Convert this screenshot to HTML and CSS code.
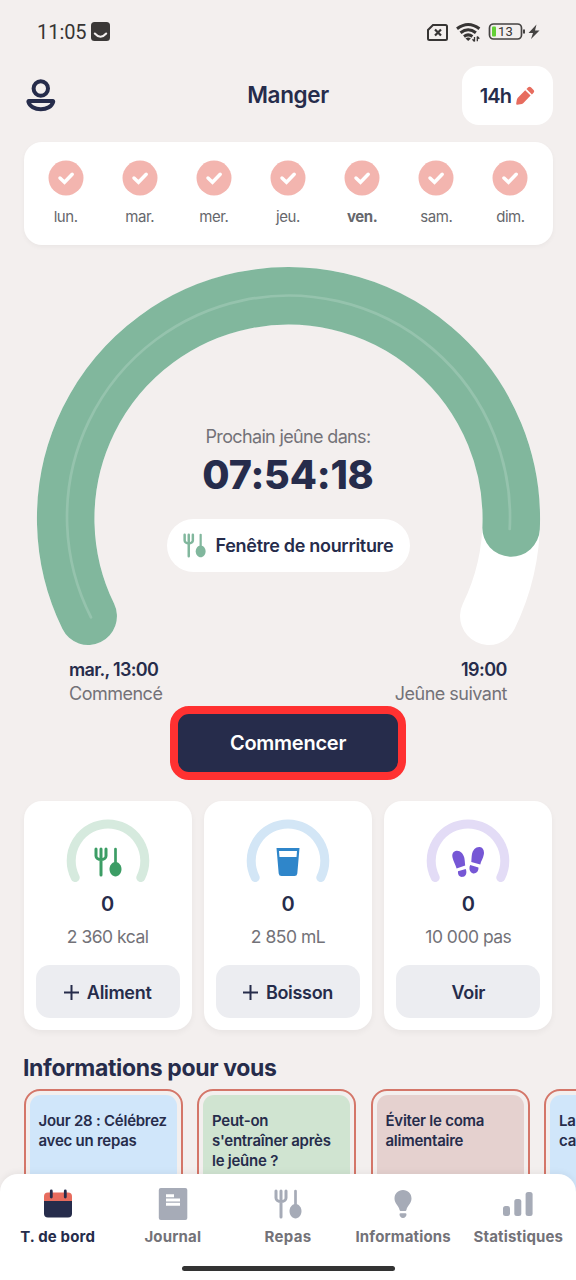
FILE: index.html
```html
<!DOCTYPE html>
<html lang="fr">
<head>
<meta charset="utf-8">
<title>Manger</title>
<link rel="stylesheet" href="styles.css">
</head>
<body>
<svg width="0" height="0" class="defs">
  <symbol id="check" viewBox="0 0 36 36"><circle cx="18" cy="18" r="17.5" fill="#f3b5af"/><path d="M12 18l4.500 4.300 7.700-8" fill="none" stroke="#fff" stroke-width="3.500" stroke-linecap="round" stroke-linejoin="miter"/></symbol>
  <symbol id="cutlery" viewBox="0 0 28 30"><path d="M2 2v7a5 3.500 0 0 0 10 0V2M7 2v26" fill="none" stroke="currentColor" stroke-width="3" stroke-linecap="round"/><path d="M21.500 2v15" stroke="currentColor" stroke-width="2.700" stroke-linecap="round"/><path d="M21.500 15c3.400 0 6 3.400 6 7 0 4.200-2.800 7.400-6 7.400s-6-3.200-6-7.400c0-3.600 2.600-7 6-7z" fill="currentColor"/></symbol>
  <symbol id="gauge" viewBox="0 0 84 64"><path d="M9.200 58.500A36.800 36.800 0 1 1 74.800 58.500" fill="none" stroke="currentColor" stroke-width="9" stroke-linecap="round"/></symbol>
</svg>
<div class="screen">
  <div class="status">
    <span class="clock">11:05</span>
    <svg class="app" width="19" height="19"><rect width="19" height="19" rx="3.500" fill="#3b3837"/><path d="M3.800 11.500q5.700 6.400 11.400 0" fill="none" stroke="#f3efee" stroke-width="2" stroke-linecap="round"/></svg>
    <svg class="sysicons" width="116" height="22" viewBox="426 21 116 22">
      <path d="M433 25h12.500a1.500 1.500 0 0 1 1.500 1.500v12a1.500 1.500 0 0 1-1.500 1.500h-16a1.500 1.500 0 0 1-1.500-1.500V30z" fill="none" stroke="#373534" stroke-width="2"/>
      <path d="M435 29.500l6 6m0-6l-6 6" stroke="#373534" stroke-width="2.200"/>
      <g fill="none" stroke="#373534" stroke-width="3"><path d="M457 28.800q11.200-8.500 22.400 0"/><path d="M460.500 32.800q7.700-6 15.400 0"/><path d="M464 36.500q4.200-3.200 8.400 0"/></g>
      <path d="M465.500 38.500q2.700-2 5.400 0l-2.700 2.500z" fill="#373534"/>
      <path d="M474.500 37v4.500M474.500 41.500l-2-2.200M477.300 41.300v-4.800M477.300 36.500l2 2.200" stroke="#373534" stroke-width="1.300" fill="none"/>
      <rect x="489.500" y="24" width="32" height="15" rx="4" fill="none" stroke="#454342" stroke-width="1.700"/>
      <rect x="492" y="26.500" width="4" height="10" rx="1" fill="#62cf35"/><path d="M524 29.500v4" stroke="#454342" stroke-width="2"/>
      <text x="498" y="36" class="battery">13</text>
      <path d="M536.500 24.500l-8 8.500h4.500l-2 6 8.500-8.500h-4.500z" fill="#454342"/>
    </svg>
  </div>
  <header class="header">
    <svg class="profile" width="30" height="34" viewBox="0 0 30 34"><g fill="none" stroke="#262c4b" stroke-width="4"><circle cx="14.800" cy="9.500" r="7.200"/><path d="M2.800 22h24c.3 0 .5.300.4.700-1.200 4.600-6.400 7.600-12.400 7.600S3.600 27.300 2.400 22.700c-.1-.4.100-.7.400-.7z"/></g></svg>
    <h1 class="title">Manger</h1>
    <div class="goal"><span>14h</span><svg width="20" height="20" viewBox="0 0 20 20" fill="#e76c5e"><path d="M10.200 4.200l5.400 5.400-7.400 7.600q-1 .9-3 1.100l-3 .4q-1.200 0-1-1.200l.5-3q.2-1.800 1.100-2.800z"/><path d="M11.500 3l1.700-1.700q1.300-1.300 2.700 0l2.700 2.700q1.300 1.300 0 2.700l-1.700 1.700z"/></svg></div>
  </header>
  <section class="week">
    <div class="day"><svg><use href="#check"/></svg><span>lun.</span></div>
    <div class="day"><svg><use href="#check"/></svg><span>mar.</span></div>
    <div class="day"><svg><use href="#check"/></svg><span>mer.</span></div>
    <div class="day"><svg><use href="#check"/></svg><span>jeu.</span></div>
    <div class="day today"><svg><use href="#check"/></svg><span>ven.</span></div>
    <div class="day"><svg><use href="#check"/></svg><span>sam.</span></div>
    <div class="day"><svg><use href="#check"/></svg><span>dim.</span></div>
  </section>
  <section class="dial">
    <svg class="ring" width="576" height="382" viewBox="0 265 576 382" fill="none" stroke-linecap="round">
      <path d="M88.200 616.200A222.800 222.800 0 1 1 488.800 616.200" stroke="#fff" stroke-width="57.500"/>
      <path d="M88.200 616.200A222.800 222.800 0 1 1 511.100 528" stroke="#81b79d" stroke-width="57.500"/>
      <path d="M91 617.300A221.500 221.500 0 1 1 509.700 529" stroke="#95c3ad" stroke-width="2.700"/>
    </svg>
    <div class="timer">
      <span class="caption">Prochain jeûne dans:</span>
      <strong class="count">07:54:18</strong>
      <div class="window"><svg width="23" height="25"><use href="#cutlery"/></svg><span>Fenêtre de nourriture</span></div>
    </div>
  </section>
  <section class="times">
    <div class="time"><strong class="start">mar., 13:00</strong><span class="began">Commencé</span></div>
    <div class="time end"><strong class="stop">19:00</strong><span class="next">Jeûne suivant</span></div>
  </section>
  <button class="begin"><span>Commencer</span></button>
  <section class="stats">
    <article class="stat food"><div class="meter"><svg class="gauge"><use href="#gauge"/></svg><svg class="glyph" width="28" height="30"><use href="#cutlery"/></svg></div><strong>0</strong><span class="target">2 360 kcal</span><div class="action"><svg width="15" height="15"><path d="M7.500 0v15M0 7.500h15"/></svg><span>Aliment</span></div></article>
    <article class="stat drink"><div class="meter"><svg class="gauge"><use href="#gauge"/></svg><svg class="glyph" width="24" height="30" viewBox="0 0 24 30"><path fill-rule="evenodd" d="M.5 1h23l-2.200 25.500q-.3 2.500-2.800 2.500h-13q-2.500 0-2.800-2.500zM3 4l.5 6h17l.5-6z" fill="currentColor"/></svg></div><strong>0</strong><span class="target">2 850 mL</span><div class="action"><svg width="15" height="15"><path d="M7.500 0v15M0 7.500h15"/></svg><span>Boisson</span></div></article>
    <article class="stat walk"><div class="meter"><svg class="gauge"><use href="#gauge"/></svg><svg class="glyph" width="34" height="32" viewBox="0 0 34 32" fill="currentColor"><path d="M1.500 10.500C.7 6.500 2.500 4 5.500 3.700c4-.3 6.700 3 7.800 7 .6 2.500.5 5 .9 7.800L5.600 21.500C4.600 17.500 2.300 14.500 1.500 10.500zM7 24.300l7.700-2.400c1.500 3.500.5 7-2.500 7.900-3.200.8-5.700-1.500-5.200-5.500z"/><path d="M32.800 7.500c.8-4-1-7-4-7.400-4-.4-7 3-7.800 7-.5 2.500-.4 5-.7 7.800l9 2.700c.6-3.500 2.900-6.100 3.500-10.100zM27.400 20.500l-8.200-2.400c-1.600 3.300-.6 7.300 2.400 8.200 3.300.9 6.300-1.800 5.800-5.800z"/></svg></div><strong>0</strong><span class="target">10 000 pas</span><div class="action"><span>Voir</span></div></article>
  </section>
  <h2 class="heading">Informations pour vous</h2>
  <section class="articles">
    <article class="tip"><div class="blue"><p>Jour 28 : Célébrez<br>avec un repas</p></div></article>
    <article class="tip"><div class="green"><p>Peut-on<br>s'entraîner après<br>le jeûne ?</p></div></article>
    <article class="tip"><div class="pink"><p>Éviter le coma<br>alimentaire</p></div></article>
    <article class="tip"><div class="blue"><p>La<br>caf</p></div></article>
  </section>
  <nav class="nav">
    <div class="tabs">
      <div class="tab active"><svg width="30" height="30" viewBox="0 0 30 30"><path d="M1 12h28v12.500q0 4-4 4H5q-4 0-4-4z" fill="#262c4b"/><path d="M1 12V7.500q0-4 4-4h20q4 0 4 4V12z" fill="#e76c5e"/><path d="M8.300 2v6M22.300 2v6" stroke="#262c4b" stroke-width="2.800" stroke-linecap="round"/></svg><span>T. de bord</span></div>
      <div class="tab"><svg width="30" height="34" viewBox="0 0 30 34"><rect x=".8" y="1" width="28.500" height="32" rx="2" fill="#a6abb7"/><path d="M8 8.800h8M8 13h14M8 17.300h14" stroke="#fff" stroke-width="3"/></svg><span>Journal</span></div>
      <div class="tab"><svg width="28" height="30"><use href="#cutlery"/></svg><span class="meals">Repas</span></div>
      <div class="tab"><svg width="18" height="30" viewBox="0 0 18 30" fill="#a6abb7"><path d="M9 1c5 0 8.500 3.700 8.500 8.400 0 5.200-4.300 7-5 11.300-.2.900-.7 1.300-1.500 1.300H7c-.8 0-1.300-.4-1.500-1.300-.7-4.300-5-6.100-5-11.300C.5 4.700 4 1 9 1zM5.500 25.300q0-1.100 1.200-1.100h4.600q1.200 0 1.200 1.100c0 2-1.400 3.700-3.500 3.700s-3.500-1.700-3.500-3.700z"/></svg><span>Informations</span></div>
      <div class="tab"><svg width="30" height="26" viewBox="0 0 30 26" fill="#a6abb7"><rect x="0" y="15" width="7" height="10" rx="2.500"/><rect x="11.300" y="8" width="7" height="17" rx="2.500"/><rect x="22.600" y="1" width="7" height="24" rx="2.500"/></svg><span>Statistiques</span></div>
    </div>
    <div class="homebar"></div>
  </nav>
</div>
</body>
</html>
```
FILE: styles.css
```css
* { box-sizing: border-box; }
body { margin: 0; background: #f3efee; color: #262c4b; font-family: Inter, "Open Sans", sans-serif; }
h1, h2, p { margin: 0; }
svg { display: block; flex: none; }
span, strong { white-space: nowrap; }
.defs { position: absolute; }
.screen { width: 576px; height: 1280px; overflow: hidden; display: flex; flex-direction: column; }
.status { height: 66px; padding: 21px 34px 0 37px; display: flex; align-items: flex-start; flex: none; }
.clock { font: 20px/22px Roboto, sans-serif; color: #373534; letter-spacing: -.05px; }
.app { margin: 1px 0 0 4px; }
.sysicons { margin-left: auto; }
.battery { font: 13px Roboto, sans-serif; fill: #373534; letter-spacing: .2px; }
.header { height: 59px; padding: 0 23px 0 26px; display: grid; grid-template-columns: 91px 1fr 91px; align-items: center; flex: none; }
.title { font-size: 22.500px; line-height: 28px; font-weight: 600; text-align: center; letter-spacing: -.35px; padding: 0 3px 2px 0; }
.goal { height: 59px; border-radius: 17px; background: #fff; display: flex; align-items: center; justify-content: center; gap: 4px; font-size: 20px; font-weight: 600; letter-spacing: -.8px; }
.week { height: 103px; margin: 17px 23.500px 0; padding: 18px 5px 0; border-radius: 18px; background: #fff; box-shadow: 0 2px 5px #0000000a; display: grid; grid-template-columns: repeat(7, 1fr); flex: none; }
.day { display: flex; flex-direction: column; align-items: center; gap: 11px; font-size: 15px; line-height: 20px; color: #66676c; letter-spacing: -.45px; }
.day svg { width: 36px; height: 36px; }
.today { font-weight: 700; }
.dial { height: 382px; margin-top: 20px; display: grid; flex: none; }
.ring, .timer { grid-area: 1 / 1; }
.timer { display: flex; flex-direction: column; align-items: center; padding-top: 160px; }
.caption { font-size: 18px; line-height: 24px; color: #737278; letter-spacing: -.65px; }
.count { font-size: 39.500px; line-height: 46px; margin-top: 3px; font-weight: 800; letter-spacing: -.2px; }
.window { margin-top: 21px; width: 243px; height: 53px; border-radius: 27px; background: #fff; display: flex; justify-content: center; align-items: center; gap: 10px; font-size: 18px; font-weight: 600; letter-spacing: -.3px; }
.window svg { color: #81b79d; }
.times { display: flex; justify-content: space-between; margin-top: 11px; padding: 0 69px; flex: none; }
.time { display: flex; flex-direction: column; font-size: 18px; line-height: 24px; letter-spacing: -.5px; }
.time strong { font-weight: 600; }
.start { letter-spacing: -.7px; }
.time span { color: #737278; }
.end { align-items: flex-end; }
.begin { width: 236px; height: 74px; margin: 0 auto; border: 8px solid #ff3131; border-radius: 19px; background: #262c4b; color: #fff; font: 600 20px Inter, sans-serif; letter-spacing: -.25px; flex: none; }
.stats { display: grid; grid-template-columns: repeat(3, 1fr); gap: 12px; margin: 21px 23.500px 0; flex: none; }
.stat { height: 229px; padding: 18px 12px 12px; border-radius: 18px; background: #fff; box-shadow: 0 3px 6px #0000000b; display: flex; flex-direction: column; align-items: center; }
.stat strong { font-size: 20px; line-height: 24px; margin-top: 9px; font-weight: 600; }
.target { font-size: 17.500px; line-height: 24px; margin-top: 9px; color: #737278; letter-spacing: -.5px; }
.meter { width: 84px; height: 64px; display: grid; justify-items: center; }
.gauge, .glyph { grid-area: 1 / 1; }
.gauge { width: 84px; height: 64px; }
.glyph { margin-top: 28px; }
.food .gauge { color: #d6eade; }
.food .glyph { color: #3c9d65; }
.drink .gauge { color: #d3e6f6; }
.drink .glyph { color: #2f86ca; }
.walk .gauge { color: #e3dcf6; }
.walk .glyph { color: #7657d5; margin-top: 28px; }
.action { margin-top: auto; width: 100%; height: 53px; padding-top: 1px; border-radius: 14px; background: #ecedf1; display: flex; justify-content: center; align-items: center; gap: 8px; font-size: 18px; font-weight: 600; letter-spacing: -.3px; }
.action path { stroke: #262c4b; stroke-width: 2; }
.heading { font-size: 23px; line-height: 28px; font-weight: 700; letter-spacing: -.35px; margin: 24px 23px 0; flex: none; }
.articles { height: 115px; margin-top: 7px; padding-left: 23.500px; display: flex; gap: 14.500px; overflow: hidden; flex: none; }
.tip { width: 159px; height: 180px; padding: 4px; border: 2px solid #d47669; border-radius: 16px; flex: none; }
.tip div { height: 100%; padding: 16px 9px; border-radius: 11px; font-size: 15px; font-weight: 600; line-height: 20px; letter-spacing: -.25px; white-space: nowrap; }
.blue { background: #d0e6fa; }
.green { background: #d0e4d1; }
.pink { background: #e5d1cf; }
.nav { position: relative; height: 106px; margin-top: -30px; border-radius: 18px 18px 0 0; background: #fff; box-shadow: 0 -2px 6px #0000000d; flex: none; }
.tabs { display: grid; grid-template-columns: repeat(5, 115.200px); height: 91.500px; }
.tab { display: grid; grid-template-rows: 35px 20px; justify-items: center; align-items: center; align-content: start; row-gap: 6px; padding-top: 12px; font-size: 15px; line-height: 20px; font-weight: 700; color: #737278; letter-spacing: .15px; }
.tab svg { color: #a6abb7; }
.meals { letter-spacing: .3px; }
.active { color: #262c4b; }
.homebar { width: 213px; height: 5px; border-radius: 3px; background: #333; margin: 0 auto; }
```
